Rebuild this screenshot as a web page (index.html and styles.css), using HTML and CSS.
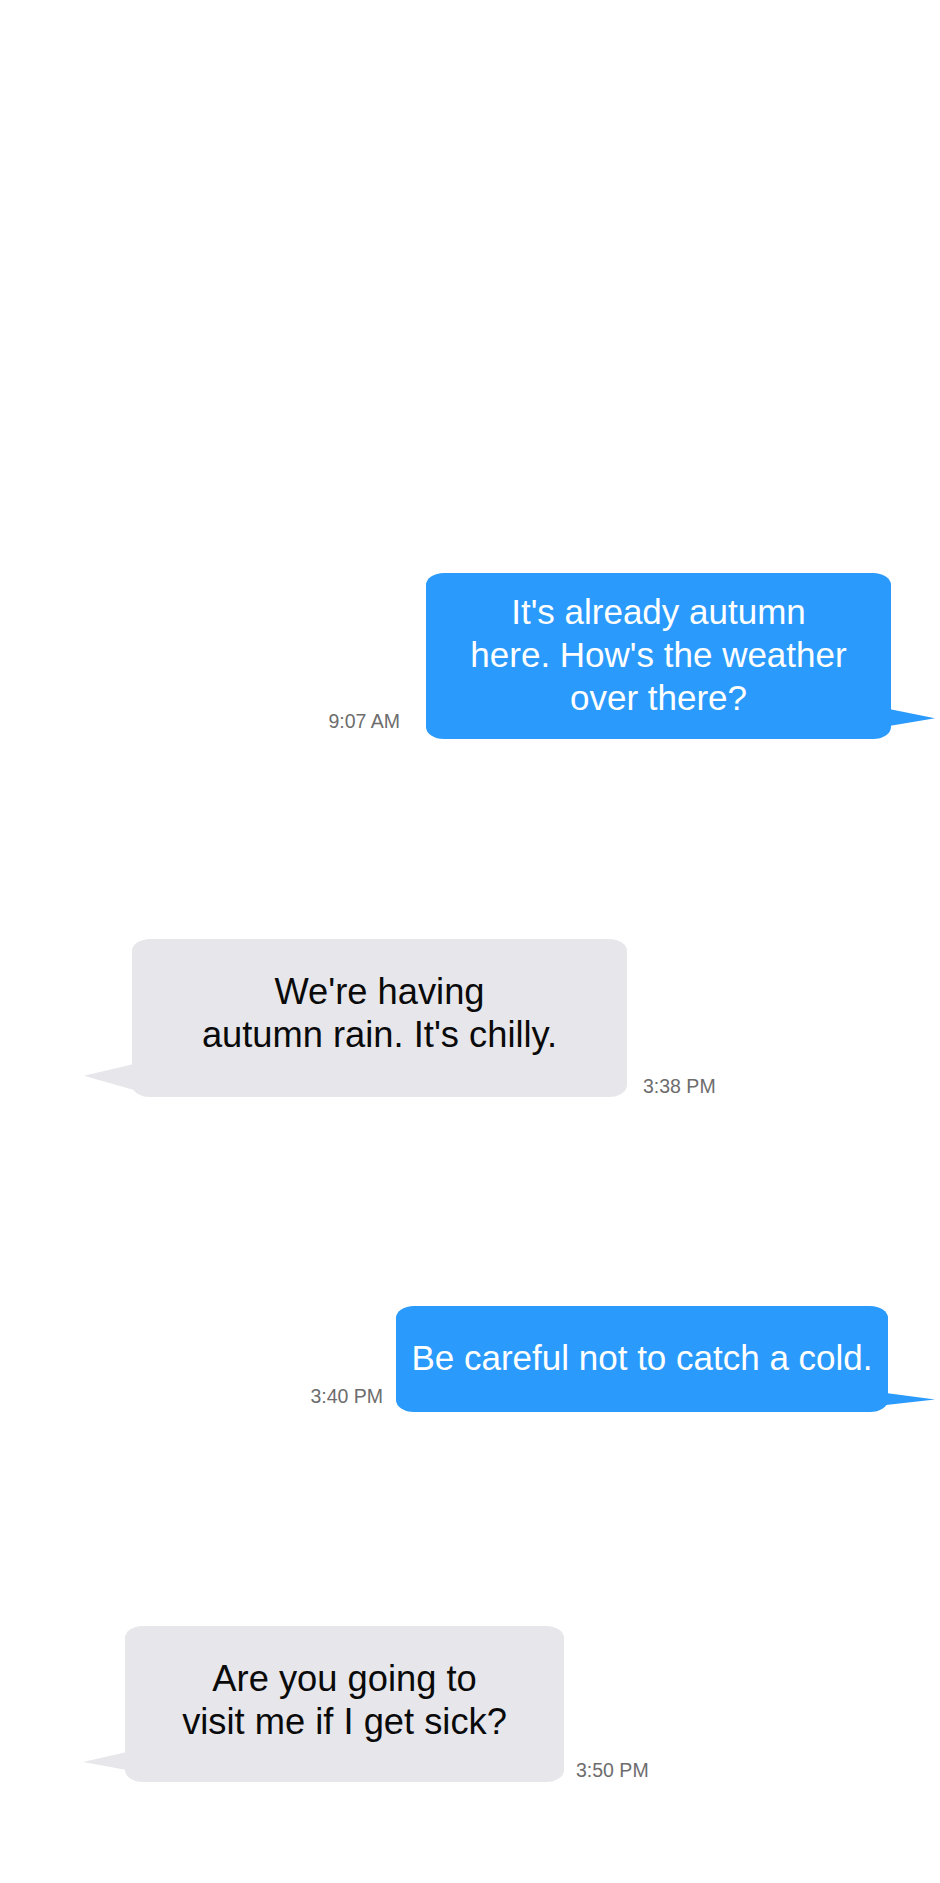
FILE: index.html
```html
<!DOCTYPE html>
<html lang="en">
<head>
<meta charset="utf-8">
<title>Messages</title>
<link rel="stylesheet" href="styles.css">
</head>
<body>
<main class="thread">
  <div class="row row--out row-1">
    <span class="time time-1">9:07 AM</span>
    <div class="bubble bubble--out bubble-1">It's already autumn<br>here. How's the weather<br>over there?</div>
  </div>
  <div class="row row--in row-2">
    <div class="bubble bubble--in bubble-2">We're having<br>autumn rain. It's chilly.</div>
    <span class="time time-2">3:38 PM</span>
  </div>
  <div class="row row--out row-3">
    <span class="time time-3">3:40 PM</span>
    <div class="bubble bubble--out bubble-3">Be careful not to catch a cold.</div>
  </div>
  <div class="row row--in row-4">
    <div class="bubble bubble--in bubble-4">Are you going to<br>visit me if I get sick?</div>
    <span class="time time-4">3:50 PM</span>
  </div>
</main>
</body>
</html>
```
FILE: styles.css
```css
html, body {
  margin: 0;
  padding: 0;
  background: #ffffff;
}

.thread {
  width: 940px;
  min-height: 1883px;
  box-sizing: border-box;
  padding-top: 573px;
  display: flex;
  flex-direction: column;
  font-family: "Liberation Sans", Arial, sans-serif;
}

.row {
  display: flex;
  align-items: flex-end;
}

.row--out { justify-content: flex-end; }
.row--in { justify-content: flex-start; }

.row-1 { padding-right: 49px; gap: 26px; }
.row-2 { margin-top: 200px; padding-left: 132px; gap: 16px; }
.row-3 { margin-top: 209px; padding-right: 52px; gap: 13px; }
.row-4 { margin-top: 214px; padding-left: 125px; gap: 12px; }

.time {
  font-size: 19.5px;
  line-height: 22px;
  color: #6d6d6d;
  white-space: nowrap;
}
.time-1 { margin-bottom: 7px; }
.time-2 { margin-bottom: 0; }
.time-3 { margin-bottom: 5px; }
.time-4 { margin-bottom: 1px; }

.bubble {
  position: relative;
  box-sizing: border-box;
  font-size: 35px;
  line-height: 43px;
  text-align: center;
  white-space: nowrap;
  border-radius: 18px / 12px;
}

.bubble--out {
  background: #2a9bfc;
  color: #ffffff;
}
.bubble--in {
  background: #e6e6eb;
  color: #0a0a0a;
  font-size: 36.3px;
}

.bubble::after {
  content: "";
  position: absolute;
  background: inherit;
}

.bubble--out::after {
  left: 100%;
  margin-left: -2px;
  clip-path: polygon(0 0, 100% 55%, 0 100%);
}
.bubble--in::after {
  right: 100%;
  margin-right: -2px;
  clip-path: polygon(100% 0, 0 45%, 100% 100%);
}

.bubble-1 {
  width: 465px;
  padding: 17px 0 20px;
}
.bubble-1::after { width: 46px; height: 17px; bottom: 13px; }

.bubble-2 {
  width: 495px;
  padding: 31px 0 41px;
}
.bubble-2::after { width: 50px; height: 26px; bottom: 7px; }

.bubble-3 {
  width: 492px;
  padding: 30px 0 33px;
}
.bubble-3::after { width: 49px; height: 12px; bottom: 7px; }

.bubble-4 {
  width: 439px;
  padding: 31px 0 39px;
}
.bubble-4::after { width: 44px; height: 18px; bottom: 12px; clip-path: polygon(100% 0, 0 55%, 100% 100%); }
```
